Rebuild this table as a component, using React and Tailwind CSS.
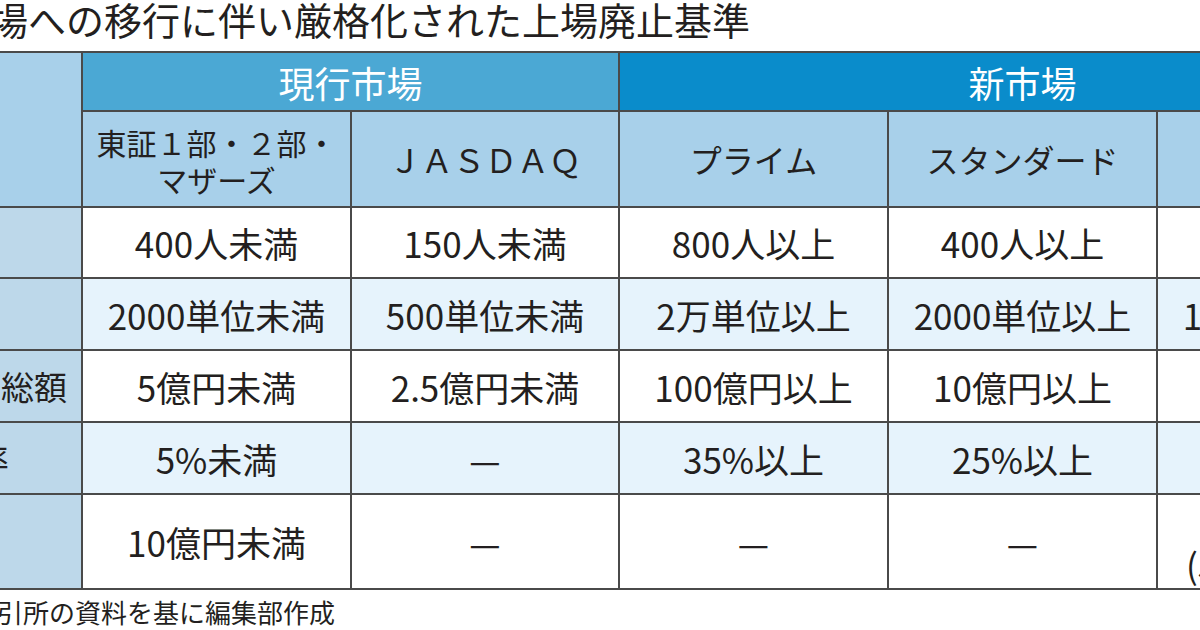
import React from "react";

const font = { fontFamily: '"Noto Sans CJK JP", "Noto Sans", sans-serif' };

const rows = [
  { label: "", pr: "pr-[14px]", bg: "bg-white", cells: ["400人未満", "150人未満", "800人以上", "400人以上", "150人以上"] },
  { label: "", pr: "pr-[14px]", bg: "bg-[#e6f3fc]", cells: ["2000単位未満", "500単位未満", "2万単位以上", "2000単位以上", "1000単位以上"] },
  { label: "時価総額", pr: "pr-[14px]", bg: "bg-white", cells: ["5億円未満", "2.5億円未満", "100億円以上", "10億円以上", "5億円以上"] },
  { label: "流通株式比率", pr: "pr-[72px]", bg: "bg-[#e6f3fc]", cells: ["5%未満", "—", "35%以上", "25%以上", "25%以上"] },
];

const App = () => {
  return (
    <div className="w-[1200px] h-[630px] overflow-hidden bg-white text-[#231f20]" style={font}>
      {/* Title */}
      <div className="h-[51px] overflow-hidden">
        <p className="ml-[-10px] whitespace-nowrap text-[38px] leading-[38px]">
          場への移行に伴い厳格化された上場廃止基準
        </p>
      </div>

      {/* Table */}
      <div className="w-[1423px] grid grid-cols-[81px_267px_266px_267px_267px_267px] grid-rows-[57px_94px_69px_70px_70px_70px_93px] gap-[2px] bg-[#4a4a4a] border-y-2 border-[#4a4a4a]">
        <div className="row-span-2 bg-[#a8d0ea]" />
        <div className="col-span-2 bg-[#4ba8d4] flex items-center justify-center text-white text-[36px] leading-none">
          現行市場
        </div>
        <div className="col-span-3 bg-[#0a8ccb] flex items-center justify-center text-white text-[36px] leading-none">
          新市場
        </div>

        <div className="bg-[#a8d0ea] flex flex-col items-center justify-center text-[30px] leading-[37px] pt-[4px] whitespace-nowrap">
          <span>東証１部・２部・</span>
          <span>マザーズ</span>
        </div>
        <div className="bg-[#a8d0ea] flex items-center justify-center text-[32px] leading-none">
          ＪＡＳＤＡＱ
        </div>
        <div className="bg-[#a8d0ea] flex items-center justify-center text-[32px] leading-none">
          プライム
        </div>
        <div className="bg-[#a8d0ea] flex items-center justify-center text-[32px] leading-none">
          スタンダード
        </div>
        <div className="bg-[#a8d0ea] flex items-center justify-center text-[32px] leading-none">
          グロース
        </div>

        {rows.map((row, i) => (
          <React.Fragment key={i}>
            <div className={`bg-[#bdd8ea] overflow-hidden flex items-center justify-end whitespace-nowrap text-[33px] leading-none ${row.pr}`}>
              {row.label}
            </div>
            {row.cells.map((c, j) => (
              <div
                key={j}
                className={`${row.bg} flex items-center justify-center whitespace-nowrap text-[35px] leading-none ${j === 4 && i !== 1 ? "pl-[300px]" : ""}`}
              >
                {c}
              </div>
            ))}
          </React.Fragment>
        ))}

        {/* Last row */}
        <div className="bg-[#bdd8ea]" />
        <div className="bg-white flex items-center justify-center text-[35px] leading-none">10億円未満</div>
        <div className="bg-white flex items-center justify-center text-[35px] leading-none">—</div>
        <div className="bg-white flex items-center justify-center text-[35px] leading-none">—</div>
        <div className="bg-white flex items-center justify-center text-[35px] leading-none">—</div>
        <div className="bg-white flex flex-col justify-center items-start pl-[28px] text-[35px] leading-[44px] whitespace-nowrap">
          <span>&nbsp;</span>
          <span>(5億円以上)</span>
        </div>
      </div>

      {/* Source */}
      <div className="pt-[7px] overflow-hidden">
        <p className="ml-[-3px] whitespace-nowrap text-[26px] leading-[30px]">
          引所の資料を基に編集部作成
        </p>
      </div>
    </div>
  );
};

export default App;
